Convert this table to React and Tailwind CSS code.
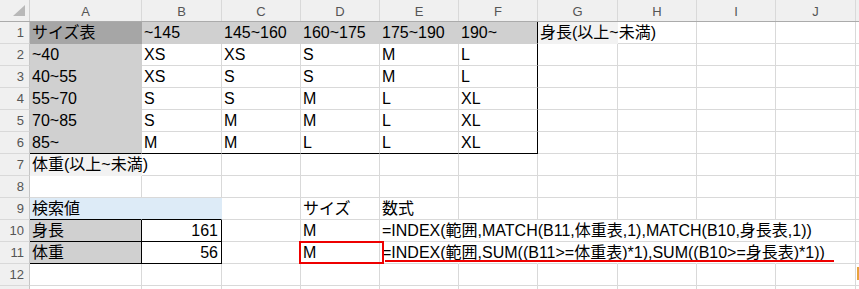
import React from 'react';

const COLS = ['A', 'B', 'C', 'D', 'E', 'F', 'G', 'H', 'I', 'J'];
const W = ['w-[112px]', 'w-[80px]', 'w-[79px]', 'w-[79px]', 'w-[79px]', 'w-[79px]', 'w-[80px]', 'w-[79px]', 'w-[79px]', 'w-[80px]'];

// fills / borders (n = hidden by fill or overflow text)
const FILL = { w: '', d: 'bg-[#a6a6a6]', s: 'bg-[#d0d0d0]', l: 'bg-[#f2f2f2]', b: 'bg-[#ddebf7]' };
const RB = { g: 'border-r-[#d9d9d9]', k: 'border-r-black', n: 'border-r-transparent' };
const BB = { g: 'border-b-[#d9d9d9]', k: 'border-b-black', n: 'border-b-transparent' };

const c = (t = '', f = 'w', r = 'g', b = 'g', extra = {}) => ({ t, f, r, b, ...extra });
const blank = n => Array.from({ length: n }, () => c());

const SIZES = [
  ['~40', 'XS', 'XS', 'S', 'M', 'L'],
  ['40~55', 'XS', 'S', 'S', 'M', 'L'],
  ['55~70', 'S', 'S', 'M', 'L', 'XL'],
  ['70~85', 'S', 'M', 'M', 'L', 'XL'],
  ['85~', 'M', 'M', 'L', 'L', 'XL'],
];

const F1 = '=INDEX(範囲,MATCH(B11,体重表,1),MATCH(B10,身長表,1))';
const F2 = '=INDEX(範囲,SUM((B11>=体重表)*1),SUM((B10>=身長表)*1))';

const ROWS = [
  [
    c('サイズ表', 'd', 'n', 'n'), c('~145', 's', 'n', 'n'), c('145~160', 's', 'n', 'n'),
    c('160~175', 's', 'n', 'n'), c('175~190', 's', 'n', 'n'), c('190~', 's', 'k', 'n'),
    c('身長(以上~未満)', 'l', 'n', 'n'), ...blank(3),
  ],
  ...SIZES.map((r, i) => {
    const b = i === 4 ? 'k' : 'g';
    return [
      c(r[0], 's', 'n', i === 4 ? 'k' : 'n'),
      c(r[1], 'w', 'g', b), c(r[2], 'w', 'g', b), c(r[3], 'w', 'g', b), c(r[4], 'w', 'g', b),
      c(r[5], 'w', 'k', b), ...blank(4),
    ];
  }),
  [c('体重(以上~未満)', 'l', 'n', 'n'), ...blank(9)],
  blank(10),
  [c('検索値', 'b', 'n', 'k'), c('', 'b', 'n', 'k'), c(), c('サイズ'), c('数式'), ...blank(5)],
  [
    c('身長', 's', 'k', 'k'), c('161', 'w', 'k', 'k', { right: true }), c(), c('M'),
    c(F1, 'w', 'n'), c('', 'w', 'n'), c('', 'w', 'n'), c('', 'w', 'n'), c('', 'w', 'n'), c(),
  ],
  [
    c('体重', 's', 'k', 'k'), c('56', 'w', 'k', 'k', { right: true }), c(), c('M', 'w', 'g', 'g', { box: true }),
    c(F2, 'w', 'n', 'g', { under: true }), c('', 'w', 'n'), c('', 'w', 'n'), c('', 'w', 'n'), c('', 'w', 'n'), c(),
  ],
  blank(10),
  blank(10),
];

function Cell({ cell, w }) {
  return (
    <div className={`relative h-[22px] shrink-0 border-r border-b ${w} ${FILL[cell.f]} ${RB[cell.r]} ${BB[cell.b]}`}>
      <div className={`flex h-full items-center whitespace-nowrap ${cell.right ? 'justify-end pr-[3px]' : 'pl-[2px]'}`}>
        {cell.t && <span className="relative z-10 leading-[21px]">{cell.t}</span>}
      </div>
      {cell.box && <div className="absolute -left-[2px] -top-[1px] z-20 h-[23px] w-[85px] border-2 border-[#ee0000]" />}
      {cell.under && <div className="absolute left-[5px] top-[18px] z-20 h-[2px] w-[449px] bg-[#ee0000]" />}
    </div>
  );
}

export default function App() {
  return (
    <div className="relative h-[289px] w-[859px] overflow-hidden bg-white text-[16px] text-black font-['Liberation_Sans','Noto_Sans_CJK_JP',sans-serif]">
      {/* column headers */}
      <div className="flex h-[22px] border-b border-b-[#ababab] bg-[#f0f0f0]">
        <div className="h-full w-[30px] shrink-0 border-r border-r-[#d0d0d0]">
          <svg width="29" height="21" viewBox="0 0 29 21">
            <polygon points="25,5 25,16 13,16" fill="#b8b8b8" />
          </svg>
        </div>
        {COLS.map((l, i) => (
          <div key={l} className={`flex h-full shrink-0 justify-center border-r border-r-[#d9d9d9] text-[13px] leading-[24px] text-[#555] ${W[i]}`}>
            {l}
          </div>
        ))}
        <div className="flex-1" />
      </div>

      {ROWS.map((row, ri) => (
        <div key={ri} className="flex">
          <div className="flex h-[22px] w-[30px] shrink-0 justify-end border-r border-b border-r-[#c6c6c6] border-b-[#d9d9d9] bg-[#f0f0f0] pr-[5px] text-[13px] leading-[22px] text-[#555]">
            {ri < 12 ? ri + 1 : ''}
          </div>
          {row.map((cell, ci) => (
            <Cell key={ci} cell={cell} w={W[ci]} />
          ))}
          <div className="h-[22px] flex-1 border-b border-b-[#d9d9d9]" />
        </div>
      ))}

      <div className="absolute right-0 top-[267px] h-[13px] w-[2px] bg-[#e8a33d]" />
    </div>
  );
}
